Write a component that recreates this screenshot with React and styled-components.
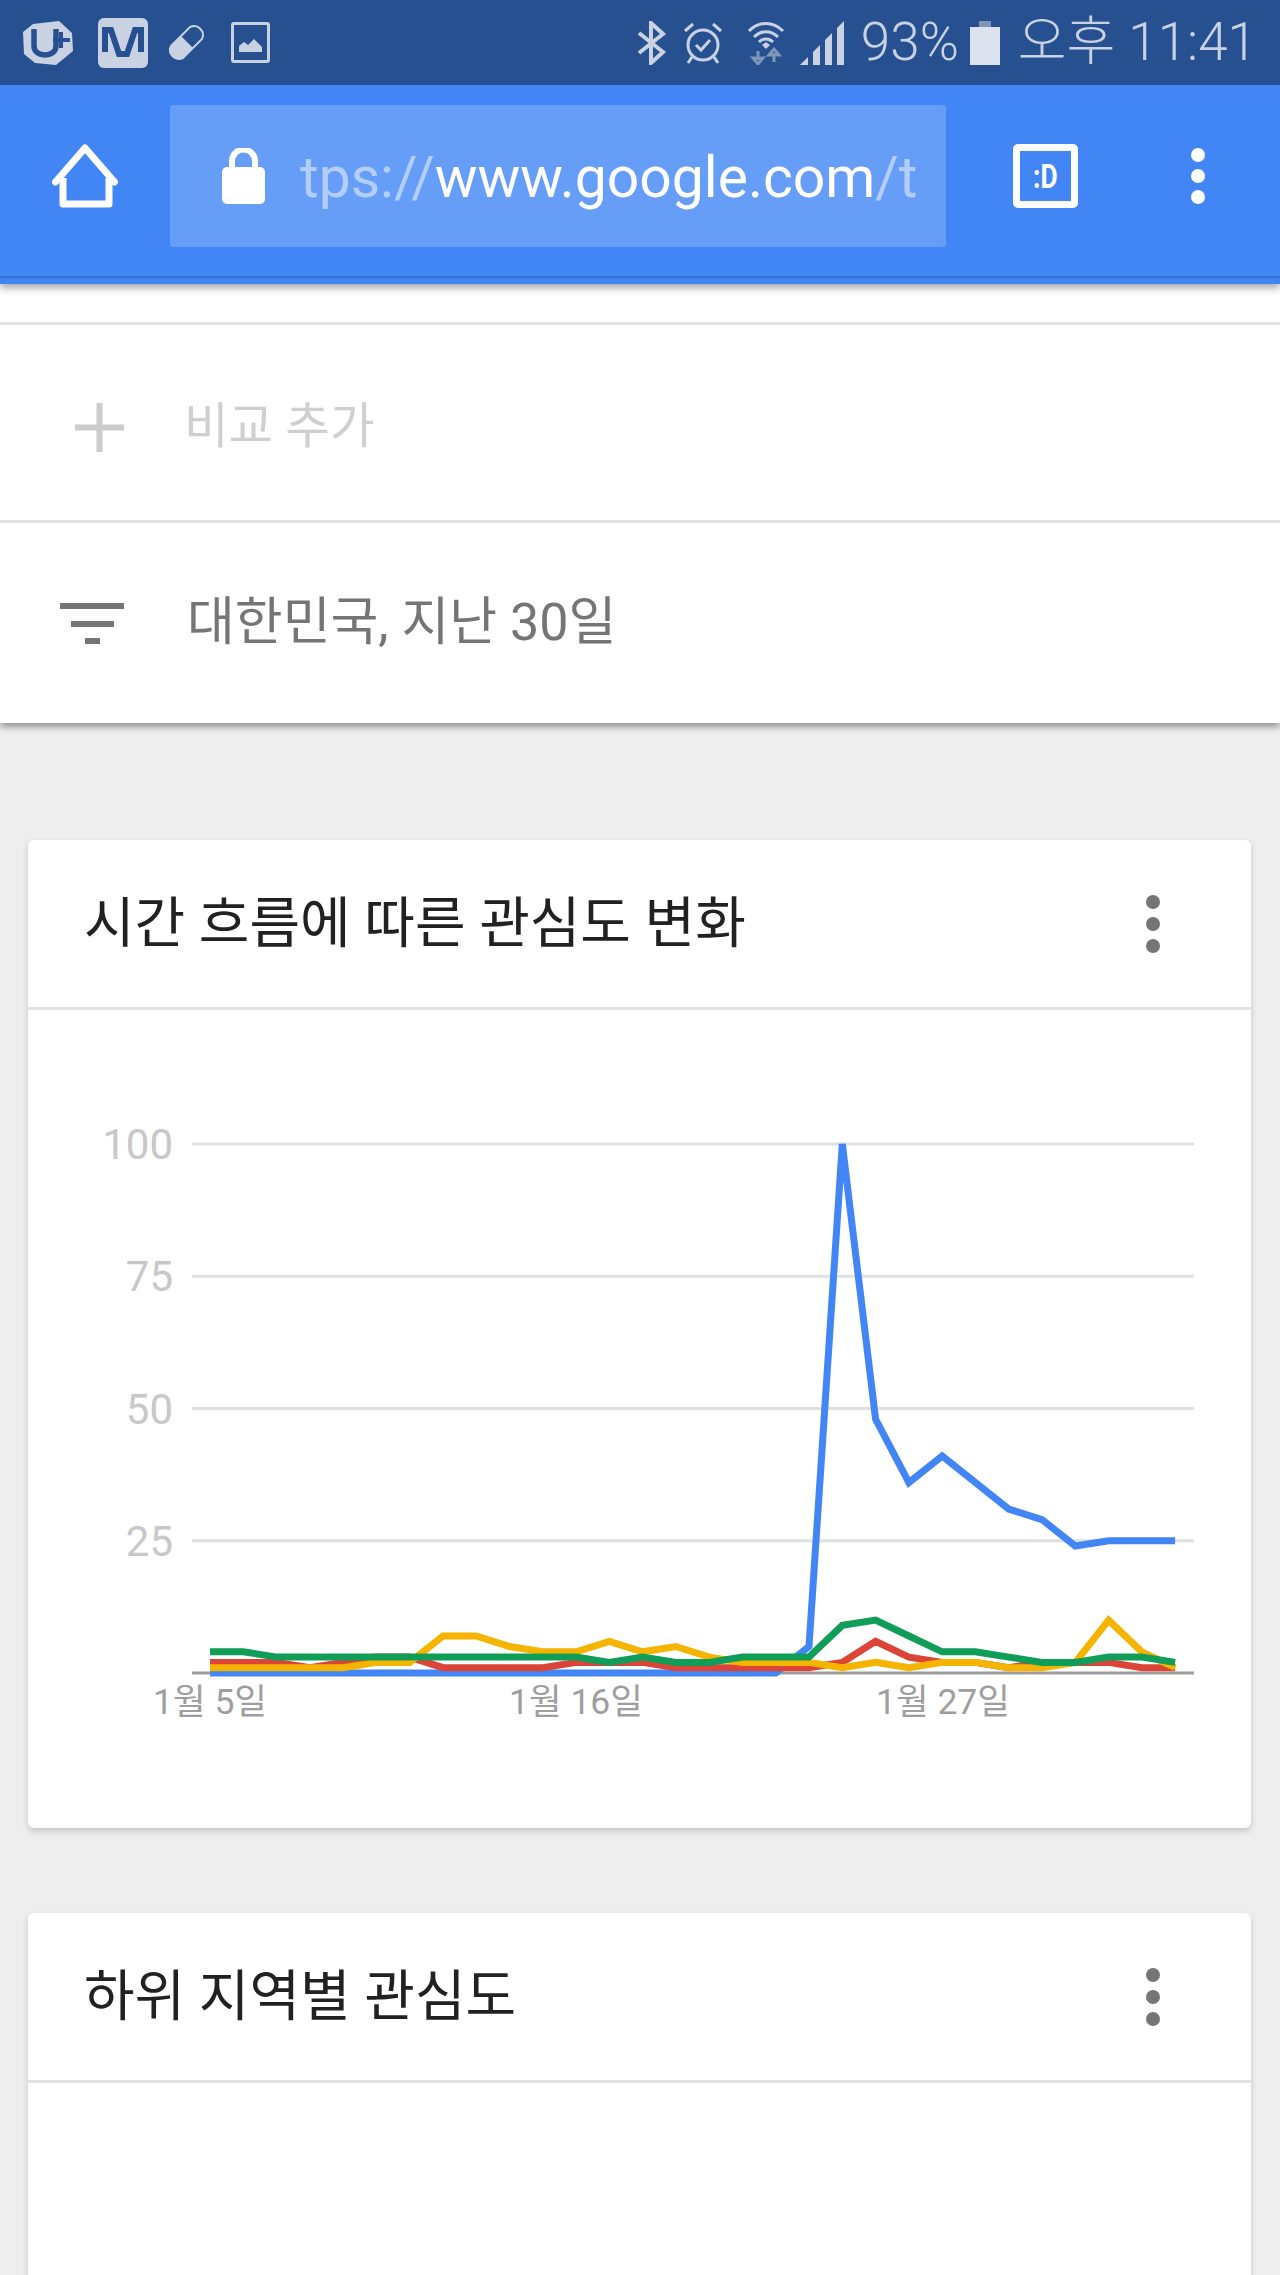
import React from "react";
import styled, { createGlobalStyle } from "styled-components";

const Global = createGlobalStyle`
  html, body { margin: 0; padding: 0; background: #eeeeee; }
  body { font-family: Roboto, "Noto Sans CJK KR", sans-serif; }
`;

const Page = styled.div`
  width: 1280px;
  height: 2275px;
  overflow: hidden;
  background: #eeeeee;
  display: flex;
  flex-direction: column;
`;

const StatusBar = styled.div`
  height: 85px;
  flex: none;
  background: #26508f;
  color: #c8d2e2;
  display: flex;
  align-items: center;
  padding-right: 23px;
  position: relative;
  z-index: 3;
`;

const StatusIcon = styled.svg`
  flex: none;
  display: block;
  margin-left: ${(p) => p.$gap}px;
`;

const StatusSpacer = styled.div`
  flex: 1;
`;

const StatusText = styled.span`
  flex: none;
  font: 300 53px/1 Roboto, "Noto Sans CJK KR", sans-serif;
  margin-left: ${(p) => p.$gap}px;
  white-space: nowrap;
`;

const Toolbar = styled.div`
  height: 199px;
  flex: none;
  background: #4285f4;
  position: relative;
  z-index: 2;
  box-shadow: 0 4px 8px rgba(0, 0, 0, 0.35);
  display: flex;
  flex-direction: column;
`;

const ToolbarRow = styled.div`
  height: 191px;
  flex: none;
  box-sizing: border-box;
  padding-bottom: 9px;
  display: flex;
  align-items: center;
`;

const ToolbarEdge = styled.div`
  height: 8px;
  flex: none;
  background: linear-gradient(#386fca 0, #3b77da 25%, #4285f4 40%);
`;

const HomeIcon = styled.svg`
  flex: none;
  margin-left: 52px;
  display: block;
`;

const UrlBox = styled.div`
  width: 776px;
  height: 142px;
  margin-left: 52px;
  flex: none;
  background: #669df6;
  border-radius: 3px;
  display: flex;
  align-items: center;
  padding: 0 20px 0 52px;
  box-sizing: border-box;
`;

const LockIcon = styled.svg`
  flex: none;
  display: block;
`;

const UrlText = styled.div`
  margin-left: 35px;
  padding-top: 5px;
  flex: 1;
  min-width: 0;
  overflow: hidden;
  white-space: nowrap;
  font: 400 57px/1.3 Roboto, sans-serif;
  color: #ffffff;
`;

const UrlFaded = styled.span`
  color: #b3cefb;
`;

const TabBox = styled.div`
  width: 65px;
  height: 64px;
  margin-left: 67px;
  flex: none;
  box-sizing: border-box;
  border: 7px solid #ffffff;
  border-radius: 5px;
  color: #fff;
  display: flex;
  align-items: center;
  justify-content: center;
  font: 700 33px/1 Roboto, sans-serif;
`;

const TabGlyph = styled.span`
  display: block;
  transform: scaleX(0.8);
`;

const Dots = styled.div`
  flex: none;
  display: flex;
  flex-direction: column;
  gap: ${(p) => p.$gap}px;
  margin-left: ${(p) => p.$left || 0}px;
`;

const Dot = styled.span`
  display: block;
  width: ${(p) => p.$w}px;
  height: ${(p) => p.$w}px;
  border-radius: 50%;
  background: ${(p) => p.$color};
`;

const Panel = styled.div`
  flex: none;
  background: #fff;
  position: relative;
  z-index: 1;
  box-shadow: 0 4px 7px rgba(0, 0, 0, 0.38);
`;

const PanelTop = styled.div`
  height: 38px;
`;

const PanelRow = styled.div`
  height: ${(p) => p.$h}px;
  box-sizing: content-box;
  padding-top: ${(p) => p.$pad || 0}px;
  border-top: 3px solid #e2e2e2;
  display: flex;
  align-items: center;
  color: ${(p) => p.$color};
  font: 400 ${(p) => p.$size}px/1 Roboto, "Noto Sans CJK KR", sans-serif;
`;

const RowIcon = styled.svg`
  flex: none;
  display: block;
  margin-left: ${(p) => p.$left}px;
  margin-right: ${(p) => p.$right}px;
`;

const Card = styled.section`
  flex: none;
  margin: ${(p) => p.$top}px 29px 0 28px;
  background: #fff;
  border-radius: 6px;
  box-shadow: 0 3px 6px rgba(0, 0, 0, 0.18);
`;

const CardHeader = styled.div`
  height: 170px;
  box-sizing: border-box;
  border-bottom: 3px solid #e2e2e2;
  display: flex;
  align-items: center;
  justify-content: space-between;
  padding: 0 91px 0 56px;
`;

const CardTitle = styled.h2`
  margin: 0;
  font: 400 55px/1 Roboto, "Noto Sans CJK KR", sans-serif;
  color: #212121;
`;

const ChartBody = styled.div`
  height: 818px;
`;

const ChartSvg = styled.svg`
  display: block;
  width: 1223px;
  height: 818px;
`;

const AxisLabel = styled.text`
  font: 400 ${(p) => p.$size}px Roboto, "Noto Sans CJK KR", sans-serif;
  fill: ${(p) => p.$fill};
`;

const EmptyBody = styled.div`
  height: 300px;
`;

const BASE = 1673;
const TOP = 1144;
const xAt = (i) => 210 + i * 33.28;
const yAt = (v) => BASE - (v * (BASE - TOP)) / 100;
const pts = (arr) => arr.map((v, i) => `${xAt(i).toFixed(1)},${yAt(v).toFixed(1)}`).join(" ");

const series = [
  { color: "#4285f4", data: [0,0,0,0,0,0,0,0,0,0,0,0,0,0,0,0,0,0,5,100,48,36,41,36,31,29,24,25,25,25] },
  { color: "#db4437", data: [2,2,2,1,2,3,3,1,1,1,1,2,2,2,1,1,1,1,1,2,6,3,2,2,1,2,2,2,1,1] },
  { color: "#f4b400", data: [1,1,1,1,1,2,2,7,7,5,4,4,6,4,5,3,2,2,2,1,2,1,2,2,1,1,2,10,4,1] },
  { color: "#0f9d58", data: [4,4,3,3,3,3,3,3,3,3,3,3,2,3,2,2,3,3,3,9,10,7,4,4,3,2,2,3,3,2] },
];

const grid = [
  { label: "100", v: 100 },
  { label: "75", v: 75 },
  { label: "50", v: 50 },
  { label: "25", v: 25 },
];

const xLabels = [
  { label: "1월 5일", x: 210 },
  { label: "1월 16일", x: 576 },
  { label: "1월 27일", x: 943 },
];

const ICON = "#c8d2e2";

export default function App() {
  return (
    <Page>
      <Global />
      <StatusBar>
        <StatusIcon $gap={23} width="50" height="46" viewBox="0 0 50 46">
          <path d="M10 4 L36 1 L49 13 L50 31 L33 45 L12 43 L1 34 L0 12 Z" fill={ICON} />
          <path d="M11 9 V26 C11 38 33 38 33 26 V9" fill="none" stroke="#26508f" strokeWidth="5.5" />
          <path d="M30 20 H47 M38 12 V28" fill="none" stroke="#26508f" strokeWidth="4" />
        </StatusIcon>
        <StatusIcon $gap={25} width="50" height="50" viewBox="0 0 50 50">
          <rect width="50" height="50" rx="6" fill={ICON} />
          <path d="M7 34 V12 H13 L21 36 H29 L37 12 H43 V34" fill="none" stroke="#26508f" strokeWidth="6" />
        </StatusIcon>
        <StatusIcon $gap={18} width="41" height="41" viewBox="0 0 41 41">
          <path d="M5 24 L24 5 A9 9 0 0 1 36 17 L17 36 A9 9 0 0 1 5 24 Z" fill="none" stroke={ICON} strokeWidth="2" />
          <path d="M4 25 L15 14 L27 26 L17 36 A9 9 0 0 1 4 25 Z" fill={ICON} />
        </StatusIcon>
        <StatusIcon $gap={24} width="39" height="41" viewBox="0 0 39 41">
          <rect x="1.5" y="1.5" width="36" height="38" rx="1.5" fill="none" stroke={ICON} strokeWidth="3" />
          <path d="M8 30 V24 L13 20 L17 23 L23 17 L31 25 V30 Z" fill={ICON} />
        </StatusIcon>
        <StatusSpacer />
        <StatusIcon $gap={0} width="32" height="44" viewBox="0 0 32 44">
          <path d="M3 12 L27 31 L15 42 V2 L27 13 L3 32" fill="none" stroke={ICON} strokeWidth="4" />
        </StatusIcon>
        <StatusIcon $gap={15} width="40" height="44" viewBox="0 0 40 44">
          <circle cx="20" cy="24" r="15" fill="none" stroke={ICON} strokeWidth="3" />
          <path d="M13 24 L18 29 L27 19" fill="none" stroke={ICON} strokeWidth="3" />
          <path d="M2 10 L10 3 M38 10 L30 3 M9 36 L5 42 M31 36 L35 42" fill="none" stroke={ICON} strokeWidth="3" />
        </StatusIcon>
        <StatusIcon $gap={24} width="38" height="44" viewBox="0 0 38 44">
          <path d="M2 10 C12 0 26 0 36 10 M7 16 C14 9 24 9 31 16 M12 21 C16 17 22 17 26 21" fill="none" stroke={ICON} strokeWidth="3" />
          <path d="M15 24 L19 21 L23 24 L19 28 Z" fill={ICON} />
          <path d="M11 30 V39 M6 37 L11 43 L16 37 Z" fill="none" stroke="#8096b8" strokeWidth="3" />
          <path d="M27 41 V32 M22 34 L27 28 L32 34 Z" fill="none" stroke="#8096b8" strokeWidth="3" />
        </StatusIcon>
        <StatusIcon $gap={15} width="44" height="44" viewBox="0 0 44 44">
          <path d="M0 44 L8 36 V44 Z M13 31 L20 24 V44 H13 Z M25 19 L32 12 V44 H25 Z M37 7 L44 0 V44 H37 Z" fill={ICON} />
        </StatusIcon>
        <StatusText $gap={17}>93%</StatusText>
        <StatusIcon $gap={11} width="30" height="44" viewBox="0 0 30 44">
          <rect x="9" y="0" width="12" height="6" fill="#8096b8" />
          <rect x="0" y="6" width="30" height="38" fill="#dde3ee" />
        </StatusIcon>
        <StatusText $gap={18}>오후 11:41</StatusText>
      </StatusBar>

      <Toolbar>
        <ToolbarRow>
          <HomeIcon width="66" height="64" viewBox="0 0 66 64">
            <path d="M3.5 38 L33 4 L62.5 38" fill="none" stroke="#fff" strokeWidth="7" strokeLinecap="round" strokeLinejoin="round" />
            <path d="M11 34 V60 H57 V34" fill="none" stroke="#fff" strokeWidth="7" strokeLinejoin="round" />
          </HomeIcon>
          <UrlBox>
            <LockIcon width="43" height="56" viewBox="0 0 43 56">
              <path d="M10 22 V13 A11.5 11.5 0 0 1 33 13 V22" fill="none" stroke="#fff" strokeWidth="6" />
              <rect x="0" y="19" width="43" height="37" rx="5" fill="#fff" />
            </LockIcon>
            <UrlText>
              <UrlFaded>tps://</UrlFaded>www.google.com<UrlFaded>/t</UrlFaded>
            </UrlText>
          </UrlBox>
          <TabBox><TabGlyph>:D</TabGlyph></TabBox>
          <Dots $gap={7} $left={113}>
            <Dot $w={14} $color="#fff" />
            <Dot $w={14} $color="#fff" />
            <Dot $w={14} $color="#fff" />
          </Dots>
        </ToolbarRow>
        <ToolbarEdge />
      </Toolbar>

      <Panel>
        <PanelTop />
        <PanelRow $h={185} $pad={10} $size={48.5} $color="#cfcfcf">
          <RowIcon $left={75} $right={60} width="49" height="49" viewBox="0 0 49 49">
            <path d="M24.5 0 V49 M0 24.5 H49" stroke="#cccccc" strokeWidth="6" />
          </RowIcon>
          비교 추가
        </PanelRow>
        <PanelRow $h={200} $size={52} $color="#757575">
          <RowIcon $left={60} $right={63} width="64" height="41" viewBox="0 0 64 41">
            <path d="M0 0 H64 V6 H0 Z M11 18 H54 V24 H11 Z M25 35 H40 V41 H25 Z" fill="#757575" />
          </RowIcon>
          대한민국, 지난 30일
        </PanelRow>
      </Panel>

      <Card $top={117}>
        <CardHeader>
          <CardTitle>시간 흐름에 따른 관심도 변화</CardTitle>
          <Dots $gap={8}>
            <Dot $w={14} $color="#757575" />
            <Dot $w={14} $color="#757575" />
            <Dot $w={14} $color="#757575" />
          </Dots>
        </CardHeader>
        <ChartBody>
          <ChartSvg viewBox="28 1010 1223 818">
            {grid.map((g) => (
              <g key={g.label}>
                <line x1="192" x2="1194" y1={yAt(g.v)} y2={yAt(g.v)} stroke="#e0e0e0" strokeWidth="3" />
                <AxisLabel $size={42} $fill="#c8c8c8" x="173" y={yAt(g.v) + 15} textAnchor="end">{g.label}</AxisLabel>
              </g>
            ))}
            <line x1="192" x2="1194" y1={BASE} y2={BASE} stroke="#9e9e9e" strokeWidth="3" />
            {series.map((s) => (
              <polyline key={s.color} points={pts(s.data)} fill="none" stroke={s.color} strokeWidth="7" strokeLinejoin="miter" />
            ))}
            {xLabels.map((l) => (
              <AxisLabel key={l.label} $size={35.5} $fill="#9e9e9e" x={l.x} y="1714" textAnchor="middle">{l.label}</AxisLabel>
            ))}
          </ChartSvg>
        </ChartBody>
      </Card>

      <Card $top={85}>
        <CardHeader>
          <CardTitle>하위 지역별 관심도</CardTitle>
          <Dots $gap={8}>
            <Dot $w={14} $color="#757575" />
            <Dot $w={14} $color="#757575" />
            <Dot $w={14} $color="#757575" />
          </Dots>
        </CardHeader>
        <EmptyBody />
      </Card>
    </Page>
  );
}
